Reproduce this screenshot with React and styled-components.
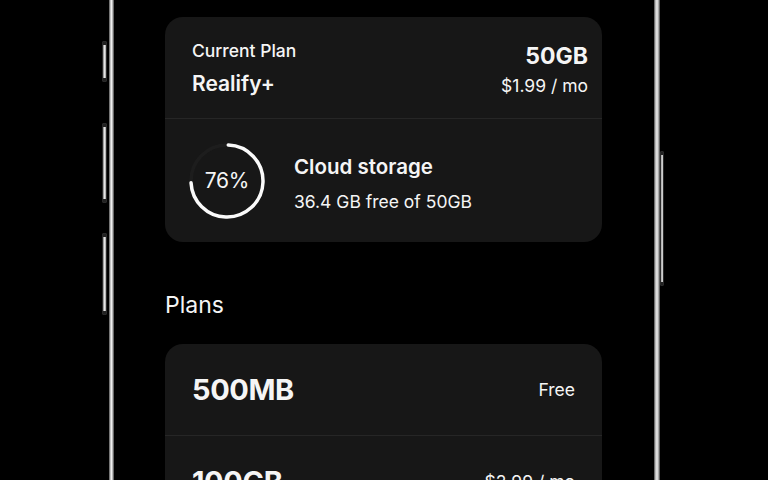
import React from "react";
import styled, { createGlobalStyle } from "styled-components";

const Global = createGlobalStyle`
  html, body { margin: 0; padding: 0; background: #000; }
  body { font-family: Inter, "Liberation Sans", Arial, sans-serif; color: #f5f5f5; }
  * { box-sizing: border-box; }
`;

const Stage = styled.div`
  width: 768px;
  height: 480px;
  overflow: hidden;
  background: #000;
  display: flex;
  align-items: stretch;
  padding-left: 102px;
`;

const Rail = styled.div`
  width: ${(p) => p.$w}px;
  display: flex;
  flex-direction: column;
  padding-top: ${(p) => p.$top}px;
  margin-right: ${(p) => p.$mr || 0}px;
`;

const SideButton = styled.div`
  flex-shrink: 0;
  height: ${(p) => p.$h}px;
  margin-top: ${(p) => p.$mt || 0}px;
  width: 100%;
  border-radius: 1px;
  border: 1px solid #2a2a2a;
  background: linear-gradient(90deg, #777 0%, #d8d8d8 40%, #f4f4f4 60%, #8a8a8a 100%);
  box-shadow: inset 0 3px 0 #222, inset 0 -3px 0 #222;
`;

const Frame = styled.div`
  display: flex;
  height: 480px;
`;

const Edge = styled.div`
  width: ${(p) => p.$w}px;
  background: linear-gradient(90deg, #4a4a4a 0%, #b8b8b8 25%, #efefef 50%, #a8a8a8 75%, #3c3c3c 100%);
`;

const Screen = styled.div`
  width: 540px;
  background: #000;
  padding: 17px 52px 0 51px;
  overflow: hidden;
`;

const Card = styled.div`
  background: #171717;
  border-radius: 18px;
  overflow: hidden;
`;

const Divider = styled.div`
  height: 1px;
  background: #262626;
`;

const PlanHeader = styled.div`
  height: 101px;
  padding: 23px 14px 0 27px;
  display: flex;
  justify-content: space-between;
`;

const Col = styled.div`
  display: flex;
  flex-direction: column;
  align-items: ${(p) => (p.$right ? "flex-end" : "flex-start")};
  padding-top: ${(p) => p.$pt || 0}px;
`;

const Label = styled.div`
  font-size: 17.5px;
  line-height: 22px;
  font-weight: 500;
  letter-spacing: 0px;
`;

const PlanName = styled.div`
  margin-top: 9px;
  font-size: 21px;
  line-height: 26px;
  font-weight: 600;
`;

const Size = styled.div`
  margin-top: 2px;
  font-size: 23px;
  line-height: 28px;
  font-weight: 700;
`;

const Price = styled.div`
  margin-top: 5px;
  font-size: 17.5px;
  line-height: 22px;
  font-weight: 400;
`;

const Storage = styled.div`
  height: 123px;
  padding-left: 23px;
  display: flex;
  align-items: center;
  gap: 28px;
`;

const RingWrap = styled.div`
  position: relative;
  width: 78px;
  height: 78px;
  display: grid;
  place-items: center;
`;

const RingSvg = styled.svg`
  position: absolute;
  inset: 0;
`;

const RingText = styled.span`
  font-size: 21px;
  font-weight: 400;
  letter-spacing: -0.2px;
`;

const StorageTitle = styled.div`
  font-size: 20.5px;
  line-height: 26px;
  font-weight: 600;
`;

const StorageSub = styled.div`
  margin-top: 11px;
  font-size: 17.5px;
  line-height: 22px;
  font-weight: 400;
`;

const SectionTitle = styled.div`
  margin-top: 49px;
  margin-bottom: 25px;
  font-size: 23px;
  line-height: 28px;
  font-weight: 400;
`;

const PlanRow = styled.div`
  height: 91px;
  padding: 0 27px;
  display: flex;
  align-items: center;
  justify-content: space-between;
`;

const RowSize = styled.div`
  font-size: 29px;
  font-weight: 700;
  letter-spacing: -0.4px;
`;

const RowPrice = styled.div`
  font-size: 17.5px;
  font-weight: 400;
`;

function Ring({ pct }) {
  const r = 36;
  const c = 2 * Math.PI * r;
  const len = c * pct;
  return (
    <RingWrap>
      <RingSvg width="78" height="78" viewBox="0 0 78 78">
        <circle cx="39" cy="39" r={r} fill="none" stroke="#1d1d1d" strokeWidth="3.5" />
        <circle
          cx="39"
          cy="39"
          r={r}
          fill="none"
          stroke="#fafafa"
          strokeWidth="3.5"
          strokeLinecap="round"
          strokeDasharray={`${len} ${c}`}
          transform="rotate(-88 39 39)"
        />
      </RingSvg>
      <RingText>76%</RingText>
    </RingWrap>
  );
}

const plans = [
  { size: "500MB", price: "Free" },
  { size: "100GB", price: "$2.99 / mo" },
];

export default function App() {
  return (
    <>
      <Global />
      <Stage>
        <Rail $w={5} $top={41} $mr={2}>
          <SideButton $h={41} />
          <SideButton $h={80} $mt={41} />
          <SideButton $h={82} $mt={30} />
        </Rail>
        <Frame>
          <Edge $w={5} />
          <Screen>
            <Card>
              <PlanHeader>
                <Col>
                  <Label>Current Plan</Label>
                  <PlanName>Realify+</PlanName>
                </Col>
                <Col $right>
                  <Size>50GB</Size>
                  <Price>$1.99 / mo</Price>
                </Col>
              </PlanHeader>
              <Divider />
              <Storage>
                <Ring pct={0.735} />
                <Col $pt={5}>
                  <StorageTitle>Cloud storage</StorageTitle>
                  <StorageSub>36.4 GB free of 50GB</StorageSub>
                </Col>
              </Storage>
            </Card>
            <SectionTitle>Plans</SectionTitle>
            <Card>
              {plans.map((p, i) => (
                <React.Fragment key={p.size}>
                  {i > 0 && <Divider />}
                  <PlanRow>
                    <RowSize>{p.size}</RowSize>
                    <RowPrice>{p.price}</RowPrice>
                  </PlanRow>
                </React.Fragment>
              ))}
            </Card>
          </Screen>
          <Edge $w={6} />
        </Frame>
        <Rail $w={4} $top={151}>
          <SideButton $h={135} />
        </Rail>
      </Stage>
    </>
  );
}
